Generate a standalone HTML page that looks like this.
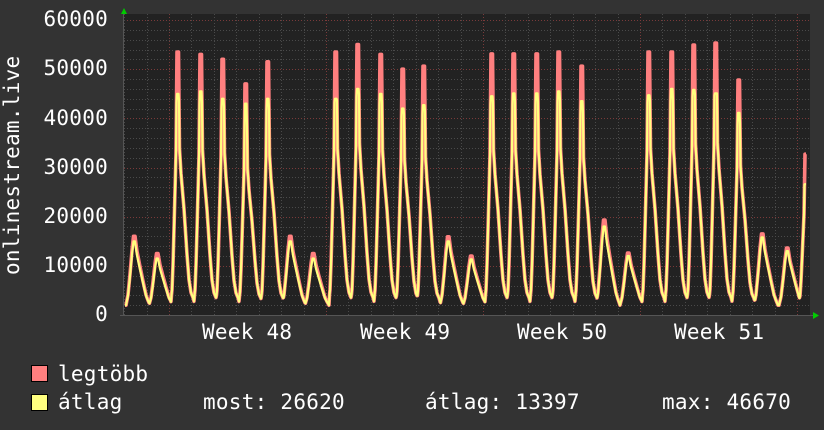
<!DOCTYPE html>
<html><head><meta charset="utf-8"><style>
html,body{margin:0;padding:0;background:#333;}
body{width:824px;height:430px;overflow:hidden;position:relative;font-family:"DejaVu Sans Mono","Liberation Mono",monospace;color:#fff;}
.t{position:absolute;font-size:21px;line-height:21px;letter-spacing:0.26px;white-space:pre;}
.sq{position:absolute;width:15px;height:15px;border:1px solid #000;}
</style></head><body>
<svg id="g" width="824" height="430" style="position:absolute;left:0;top:0"></svg>
<div class="t" style="left:0;top:0;width:24px;height:315px;"><div style="position:absolute;left:2px;top:275px;transform:rotate(-90deg);transform-origin:0 0;">onlinestream.live</div></div>
<div class="t" style="right:716px;top:9px">60000</div>
<div class="t" style="right:716px;top:58px">50000</div>
<div class="t" style="right:716px;top:108px">40000</div>
<div class="t" style="right:716px;top:157px">30000</div>
<div class="t" style="right:716px;top:206px">20000</div>
<div class="t" style="right:716px;top:255px">10000</div>
<div class="t" style="right:716px;top:304px">0</div>
<div class="t" style="left:202px;top:322px">Week 48</div>
<div class="t" style="left:360px;top:322px">Week 49</div>
<div class="t" style="left:517px;top:322px">Week 50</div>
<div class="t" style="left:674px;top:322px">Week 51</div>
<div class="sq" style="left:31px;top:365px;background:#ff7f7f"></div>
<div class="sq" style="left:31px;top:394px;background:#ffff7f"></div>
<div class="t" style="left:58px;top:364px">legtöbb</div>
<div class="t" style="left:58px;top:392px">átlag</div>
<div class="t" style="left:203px;top:392px">most: 26620</div>
<div class="t" style="left:425px;top:392px">átlag: 13397</div>
<div class="t" style="left:662px;top:392px">max: 46670</div>
<script>
var s=document.getElementById('g'),h='';
var L=124,R=810,T=14,B=315;
function Y(v){return B-v*295/60000;}
h+='<rect x="'+L+'" y="'+T+'" width="'+(R-L)+'" height="'+(B-T)+'" fill="#222"/>';
for(var v=2000;v<=60000;v+=2000){var y=Math.round(Y(v))+0.5;var maj=v%10000==0;
h+='<line x1="'+L+'" x2="'+R+'" y1="'+y+'" y2="'+y+'" stroke="'+(maj?'#7a3a3a':'#4a4a4a')+'" stroke-dasharray="1,2"/>';}
for(var k=-3;k<30;k++){var x=169+k*157/7;if(x<L||x>R)continue;x=Math.round(x)+0.5;var maj=(k%7==0);
h+='<line y1="'+T+'" y2="'+B+'" x1="'+x+'" x2="'+x+'" stroke="'+(maj?'#7a3a3a':'#4a4a4a')+'" stroke-dasharray="1,2"/>';}
var P=[[134,16000,15000],[157,12500,11500],[177,53500,45000],[200,53000,45500],[222,52000,44000],[245,47000,43000],[267,51500,44000],[290,16000,15000],[313,12500,11500],[335,53500,44000],[357,55000,46000],[380,53000,45000],[402,50000,42000],[423,50600,42700],[448,15900,15000],[471,12000,11300],[491,53100,44500],[513,53100,45100],[536,53100,45100],[558,53500,45500],[581,50600,43500],[604,19300,18000],[628,12600,12000],[648,53500,44700],[671,53500,46000],[693,54900,45800],[715,55300,45100],[738,47800,41100],[762,16500,15800],[787,13600,13000],[805,32700,26600]];
var TS=[[-6,0.02],[-5,0.06],[-4,0.16],[-3,0.3],[-2,0.45],[-1,0.6],[0,1],[1.5,1],[2.5,0.62],[4,0.52],[7,0.38],[10,0.2],[12,0.1],[14,0.05],[16,0.03],[18,0.0]];
var LS=[[-8,0.0],[-6,0.15],[-4,0.45],[-2,0.8],[-0.5,1],[1,1],[3,0.78],[6,0.56],[9,0.35],[12,0.15],[14,0.07],[16,0.0]];
function interp(tab,d){if(d<=tab[0][0]||d>=tab[tab.length-1][0])return 0;for(var i=1;i<tab.length;i++){if(d<=tab[i][0]){var a=tab[i-1],b=tab[i];return a[1]+(b[1]-a[1])*(d-a[0])/(b[0]-a[0]);}}return 0;}
function val(x,idx){var best=2000;for(var i=0;i<P.length;i++){var p=P[i],d=x-p[0],pk=p[1],tall=pk>25000;
var f=interp(tall?TS:LS,d);var v=2000+(pk-2000)*f;
if(idx==2){v=Math.min(v,p[2]);if(!tall)v=2000+(p[2]-2000)*f;}
if(v>best)best=v;}return best;}
function line(idx,col,w){var pts=[];for(var x=L+1;x<=806;x+=0.5){pts.push(x.toFixed(1)+','+Y(val(x,idx)).toFixed(1));}
return '<polyline fill="none" stroke="'+col+'" stroke-width="'+w+'" stroke-linejoin="round" points="'+pts.join(' ')+'"/>';}
h+=line(1,'#ff7f7f',3.6);h+=line(2,'#ffff7f',2.2);
h+='<line x1="123.5" x2="123.5" y1="10" y2="316" stroke="#555"/><line x1="120" x2="814" y1="315.5" y2="315.5" stroke="#555"/>';
h+='<polygon points="121,14 127,14 124,8" fill="#0c0"/><polygon points="813,312 813,319 819,315.5" fill="#0c0"/>';
s.innerHTML=h;
</script>
</body></html>
